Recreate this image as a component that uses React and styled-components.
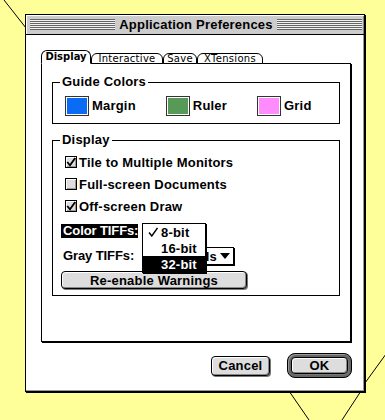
import React from "react";
import styled, { createGlobalStyle, css } from "styled-components";

const GlobalStyle = createGlobalStyle`
  html, body {
    margin: 0;
    padding: 0;
    background: #ffff99;
  }
  body {
    font-family: "Liberation Sans", Arial, sans-serif;
  }
`;

// Chicago-ish system font
const chicago = css`
  font-family: "Liberation Sans", Arial, sans-serif;
  font-weight: bold;
  font-size: 13px;
  letter-spacing: 0.2px;
  color: #000;
`;

const Desktop = styled.div`
  position: relative;
  width: 385px;
  height: 420px;
  overflow: hidden;
  box-sizing: border-box;
  padding: 14px 0 0 25px;
`;

const Lines = styled.svg`
  position: absolute;
  left: 0;
  top: 0;
`;

const Window = styled.div`
  position: relative;
  z-index: 1;
  width: 340px;
  height: 378px;
  box-sizing: border-box;
  background: #fff;
  border: 1px solid #000;
  box-shadow: 1px 1px 0 #000, inset -1px -1px 0 #999;
  display: flex;
  flex-direction: column;
`;

const TitleBar = styled.div`
  flex: none;
  height: 19px;
  background: #ccc;
  border-bottom: 1px solid #000;
  box-shadow: inset 1px 1px 0 #fff, inset -1px 0 0 #888;
  display: flex;
  align-items: center;
  gap: 3px;
  padding: 0 2px 0 4px;
`;

const Stripes = styled.div`
  flex: 1;
  height: 11px;
  background: repeating-linear-gradient(
    to bottom,
    #666 0 1px,
    #f4f4f4 1px 2px
  );
`;

const Title = styled.div`
  ${chicago};
  line-height: 19px;
  padding: 0 1px;
`;

const Body = styled.div`
  flex: 1;
  display: flex;
  flex-direction: column;
  padding: 15px 13px 0 15px;
`;

const TabRow = styled.div`
  position: relative;
  z-index: 2;
  display: flex;
  align-items: flex-end;
  height: 14px;
  margin-bottom: -1px;
`;

const Tab = styled.div`
  box-sizing: border-box;
  width: ${(p) => p.$w}px;
  height: ${(p) => (p.$active ? 14 : 11)}px;
  border: 1px solid #000;
  border-bottom-color: ${(p) => (p.$active ? "#fff" : "#000")};
  border-radius: 6px 6px 0 0;
  background: #fff;
  font-family: "DejaVu Sans", Verdana, sans-serif;
  font-size: 10px;
  letter-spacing: ${(p) => (p.$active ? "0" : "0.3px")};
  font-weight: ${(p) => (p.$active ? "bold" : "normal")};
  line-height: ${(p) => (p.$active ? 12 : 9)}px;
  text-align: center;
  color: #000;
`;

const Panel = styled.div`
  box-sizing: border-box;
  width: 310px;
  height: 279px;
  border: 1px solid #000;
  box-shadow: 1px 1px 0 #000;
  padding: 10px 10px 0 10px;
`;

const Group = styled.fieldset`
  margin: ${(p) => (p.$first ? 0 : "8px 0 0")};
  padding: 0;
  min-width: 0;
  border: 1px solid #000;
`;

const Legend = styled.legend`
  ${chicago};
  line-height: 16px;
  padding: 0 2px;
  margin-left: 7px;
`;

const SwatchRow = styled.div`
  display: flex;
  gap: 30px;
  padding: 6px 0 7px 12px;
`;

const SwatchItem = styled.div`
  display: flex;
  align-items: center;
  gap: 3px;
  ${chicago};
  line-height: 20px;
`;

const Swatch = styled.span`
  box-sizing: border-box;
  width: 24px;
  height: 20px;
  border: 1px solid #333;
  box-shadow: inset 0 0 0 1px #fff;
  background: ${(p) => p.$color};
`;

const Column = styled.div`
  display: flex;
  flex-direction: column;
  align-items: flex-start;
  padding: 3px 0 6px 8px;
`;

const CheckRow = styled.div`
  display: flex;
  align-items: center;
  gap: 2px;
  height: 22px;
  padding-left: 4px;
  ${chicago};
`;

const Box = styled.span`
  box-sizing: border-box;
  width: 12px;
  height: 12px;
  border: 1px solid #000;
  background: #ddd;
  box-shadow: inset 1px 1px 0 #fff, inset -1px -1px 0 #999;
  display: flex;
  align-items: center;
  justify-content: center;
`;

const PopRow = styled.div`
  display: flex;
  align-items: center;
  gap: 4px;
  height: 18px;
  margin-top: ${(p) => p.$mt}px;
`;

const TiffLabel = styled.span`
  ${chicago};
  letter-spacing: -0.1px;
  box-sizing: border-box;
  width: 77px;
  height: 14px;
  line-height: 14px;
  padding-left: 2px;
  white-space: nowrap;
  background: ${(p) => (p.$hl ? "#000" : "transparent")};
  color: ${(p) => (p.$hl ? "#fff" : "#000")};
`;

const MenuAnchor = styled.div`
  position: relative;
  width: 92px;
  height: 18px;
`;

const Menu = styled.div`
  position: absolute;
  z-index: 3;
  left: 0;
  top: 1px;
  width: 64px;
  box-sizing: border-box;
  background: #fff;
  border: 1px solid #000;
  box-shadow: 1px 1px 0 #000;
`;

const MenuItem = styled.div`
  display: flex;
  align-items: center;
  height: 16px;
  ${chicago};
  background: ${(p) => (p.$hl ? "#000" : "#fff")};
  color: ${(p) => (p.$hl ? "#fff" : "#000")};
`;

const MarkCol = styled.span`
  width: 17px;
  display: flex;
  justify-content: center;
  padding-left: 1px;
`;

const PopupButton = styled.div`
  box-sizing: border-box;
  width: 92px;
  height: 18px;
  border: 1px solid #000;
  box-shadow: 1px 1px 0 #000;
  background: #fff;
  display: flex;
  align-items: center;
  justify-content: flex-end;
  gap: 3px;
  padding-right: 3px;
  overflow: hidden;
  ${chicago};
  white-space: nowrap;
`;

const PushButton = styled.button`
  ${chicago};
  box-sizing: border-box;
  width: ${(p) => p.$w}px;
  height: ${(p) => p.$h}px;
  margin-top: ${(p) => p.$mt || 0}px;
  padding: 0;
  background: #ddd;
  border: 1px solid #000;
  border-radius: 4px;
  box-shadow: inset 1px 1px 0 #fff, inset -1px -1px 0 #888,
    1px 1px 0 #777;
  text-align: center;
`;

const Footer = styled.div`
  display: flex;
  justify-content: flex-end;
  align-items: center;
  gap: 17px;
  padding-top: 11px;
  margin-right: -1px;
`;

const DefaultRing = styled.span`
  display: flex;
  box-sizing: border-box;
  padding: 3px;
  border: 1px solid #000;
  border-radius: 8px;
  background: #666;
  box-shadow: inset 1px 1px 0 #999;
`;

function Check() {
  return (
    <svg width="10" height="10" viewBox="0 0 10 10">
      <path d="M1.2 5 L4 8.3 L9.2 1" fill="none" stroke="#000" strokeWidth="1.8" />
    </svg>
  );
}

function CheckBox({ checked, children }) {
  return (
    <CheckRow>
      <Box>{checked && <Check />}</Box>
      {children}
    </CheckRow>
  );
}

function MenuCheck() {
  return (
    <svg width="10" height="10" viewBox="0 0 10 10">
      <path d="M1 5.5 L3.8 9 L9.5 1" fill="none" stroke="currentColor" strokeWidth="1.4" />
    </svg>
  );
}

const tabs = [
  { label: "Display", w: 50, active: true },
  { label: "Interactive", w: 72 },
  { label: "Save", w: 34 },
  { label: "XTensions", w: 66 },
];

const colors = [
  { label: "Margin", color: "#0a6cf4" },
  { label: "Ruler", color: "#579a57" },
  { label: "Grid", color: "#ff8cff" },
];

const bitDepths = ["8-bit", "16-bit", "32-bit"];

export default function App() {
  return (
    <>
      <GlobalStyle />
      <Desktop>
        <Lines width="385" height="420">
          <g stroke="#000" strokeWidth="1" fill="none">
            <line x1="4" y1="0" x2="26" y2="28" />
            <line x1="289" y1="391" x2="309" y2="420" />
            <line x1="361" y1="391" x2="342" y2="420" />
            <line x1="365" y1="383" x2="386" y2="354" />
          </g>
        </Lines>
        <Window>
          <TitleBar>
            <Stripes />
            <Title>Application Preferences</Title>
            <Stripes />
          </TitleBar>
          <Body>
            <TabRow>
              {tabs.map((t) => (
                <Tab key={t.label} $w={t.w} $active={t.active}>
                  {t.label}
                </Tab>
              ))}
            </TabRow>
            <Panel>
              <Group $first>
                <Legend>Guide Colors</Legend>
                <SwatchRow>
                  {colors.map((c) => (
                    <SwatchItem key={c.label}>
                      <Swatch $color={c.color} />
                      {c.label}
                    </SwatchItem>
                  ))}
                </SwatchRow>
              </Group>
              <Group>
                <Legend>Display</Legend>
                <Column>
                  <CheckBox checked>Tile to Multiple Monitors</CheckBox>
                  <CheckBox>Full-screen Documents</CheckBox>
                  <CheckBox checked>Off-screen Draw</CheckBox>
                  <PopRow $mt={5}>
                    <TiffLabel $hl>Color TIFFs:</TiffLabel>
                    <MenuAnchor>
                      <Menu>
                        {bitDepths.map((b, i) => (
                          <MenuItem key={b} $hl={i === 2}>
                            <MarkCol>{i === 0 && <MenuCheck />}</MarkCol>
                            {b}
                          </MenuItem>
                        ))}
                      </Menu>
                    </MenuAnchor>
                  </PopRow>
                  <PopRow $mt={7}>
                    <TiffLabel>Gray TIFFs:</TiffLabel>
                    <PopupButton>
                      256 levels
                      <svg width="10" height="6" viewBox="0 0 10 6">
                        <path d="M0 0 H10 L5 6 Z" fill="#000" />
                      </svg>
                    </PopupButton>
                  </PopRow>
                  <PushButton $w={186} $h={18} $mt={6}>
                    Re-enable Warnings
                  </PushButton>
                </Column>
              </Group>
            </Panel>
            <Footer>
              <PushButton $w={59} $h={20}>
                Cancel
              </PushButton>
              <DefaultRing>
                <PushButton $w={57} $h={17}>
                  OK
                </PushButton>
              </DefaultRing>
            </Footer>
          </Body>
        </Window>
      </Desktop>
    </>
  );
}
